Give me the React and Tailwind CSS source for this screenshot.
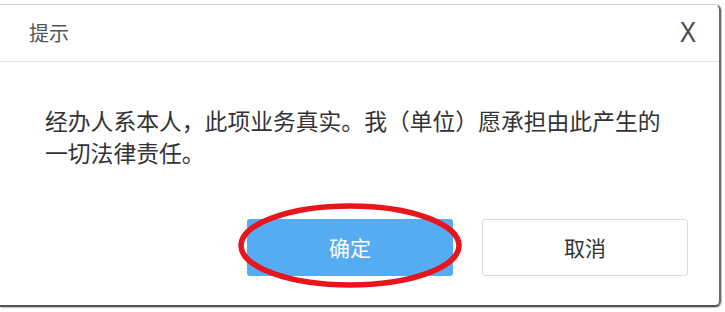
export default function App() {
  return (
    <div
      className="w-[725px] h-[312px] bg-white overflow-hidden"
      style={{ fontFamily: '"Microsoft YaHei", "Noto Sans CJK SC", "Noto Sans", sans-serif' }}
    >
      <div className="mt-[4px] w-[721px] h-[303px] flex flex-col bg-white border-t border-[#cfcfcf] border-r-2 border-b-2 border-r-[#6a6a6a] border-b-[#555] rounded-tr-[6px] rounded-br-[6px] shadow-[1px_1px_1px_rgba(0,0,0,0.25)]">
        {/* Header */}
        <div className="h-[57px] shrink-0 flex items-center justify-between pl-[29px] pr-[21px] border-b border-[#e3e3e3]">
          <span className="text-[20px] text-[#555]">提示</span>
          <span
            className="inline-block text-[30px] leading-none text-[#4a4a4a] scale-x-[0.82] -mt-[2px]"
            style={{ fontFamily: '"Liberation Sans", Arial, sans-serif' }}
          >
            X
          </span>
        </div>

        {/* Body */}
        <div className="pl-[45px] pt-[43px] text-[22.8px] leading-[32px] text-[#333] whitespace-nowrap">
          经办人系本人，此项业务真实。我（单位）愿承担由此产生的
          <br />
          一切法律责任。
        </div>

        {/* Footer */}
        <div className="mt-[50px] flex justify-end gap-[29px] pr-[31px]">
          <div className="relative">
            <button className="w-[206px] h-[57px] rounded-[3px] bg-[#55acf2] text-white text-[21px]">
              确定
            </button>
            <svg
              className="absolute left-[-9px] top-[-16px] pointer-events-none"
              width="224"
              height="85"
              viewBox="0 0 224 85"
            >
              <ellipse cx="112" cy="42.5" rx="109" ry="39.5" fill="none" stroke="#e8151d" strokeWidth="5.5" />
            </svg>
          </div>
          <button className="w-[206px] h-[57px] rounded-[3px] bg-white border border-[#dcdcdc] text-[#333] text-[21px]">
            取消
          </button>
        </div>
      </div>
    </div>
  );
}
